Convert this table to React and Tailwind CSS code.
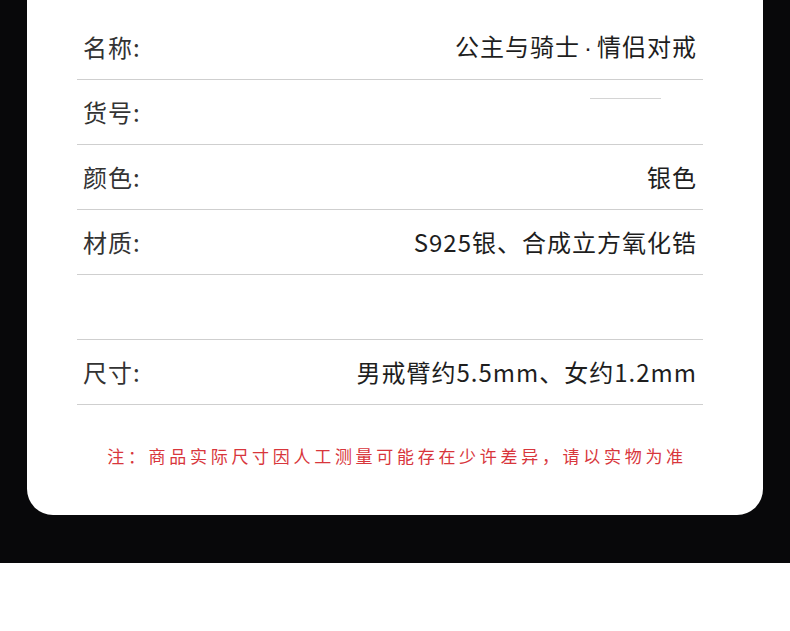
import React from 'react';

const rows = [
  { label: '名称:', value: '公主与骑士·情侣对戒' },
  { label: '货号:', value: '', mark: true },
  { label: '颜色:', value: '银色' },
  { label: '材质:', value: 'S925银、合成立方氧化锆' },
  { label: '', value: '' },
  { label: '尺寸:', value: '男戒臂约5.5mm、女约1.2mm' },
];

// the middle dot in the name is a narrow latin one, not the CJK full-width dot
function Value({ text }) {
  const parts = text.split('·');
  if (parts.length < 2) return text;
  return (
    <>
      {parts[0]}
      <span className="mx-[4px] font-['Liberation_Sans',sans-serif]">·</span>
      {parts[1]}
    </>
  );
}

export default function App() {
  return (
    <div
      className="w-[790px] h-[631px] bg-white overflow-hidden"
      style={{ fontFamily: '"Noto Sans CJK SC", "Noto Sans", sans-serif' }}
    >
      {/* dark band with the spec card */}
      <div className="h-[563px] bg-[#08080a] px-[27px]">
        <div className="h-[515px] bg-white rounded-b-[26px] pt-[15px] flex flex-col">
          <div className="pl-[50px] pr-[60px]">
            {rows.map((row, i) => (
              <div
                key={i}
                className="h-[65px] border-b border-[#cfcfcf] pl-[6px] pr-[6px] flex items-center justify-between"
              >
                <span className="text-[24px] tracking-[1px] text-[#333] leading-none">{row.label}</span>
                {row.mark ? (
                  <div className="self-start mt-[18px] mr-[36px] w-[71px] h-px bg-[#d4d4d4]" />
                ) : (
                  <span className="text-[24px] tracking-[1px] text-[#1e1e1e] leading-none">
                    <Value text={row.value} />
                  </span>
                )}
              </div>
            ))}
          </div>

          <p className="mt-[42px] pl-[4px] text-center text-[17px] tracking-[3.7px] text-[#d8363c] leading-none">
            注：商品实际尺寸因人工测量可能存在少许差异，请以实物为准
          </p>
        </div>
      </div>
    </div>
  );
}
